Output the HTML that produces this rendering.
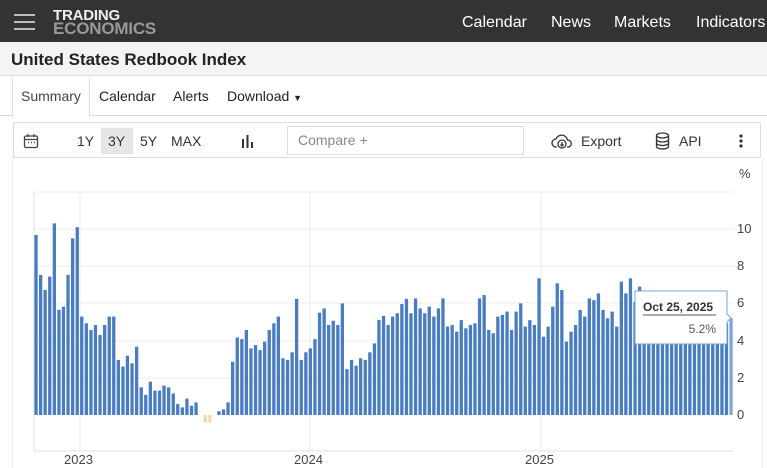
<!DOCTYPE html>
<html><head><meta charset="utf-8"><style>
*{margin:0;padding:0;box-sizing:border-box}
body{width:767px;height:468px;overflow:hidden;background:#fff;font-family:"Liberation Sans",Arial,sans-serif;position:relative;color:#333}
.nav{position:absolute;left:0;top:0;width:767px;height:42px;background:#333}
.ham{position:absolute;left:14px;width:21px;height:2px;background:#bbb}
.logo{position:absolute;left:53px;top:9px;font-weight:bold;font-size:15px;line-height:13px;letter-spacing:-0.2px}
.nav a{position:absolute;top:14px;color:#fff;font-size:16px;text-decoration:none}
.tb{position:absolute;left:0;top:42px;width:767px;height:34px;background:#f4f4f4;border-bottom:1px solid #ddd}
.tb h1{position:absolute;left:11px;top:8px;font-size:17px;font-weight:bold;color:#222}
.tabs{position:absolute;top:77px;left:0;width:767px;height:39px;border-bottom:1px solid #ddd}
.tab{position:absolute;top:11px;font-size:14px;color:#222}
.tool{position:absolute;left:13px;top:122px;width:748px;height:36px;border:1px solid #ddd}
.tool span{position:absolute;font-size:14px;color:#333}
</style></head><body>
<div class="nav">
<div class="ham" style="top:14px"></div><div class="ham" style="top:21px"></div><div class="ham" style="top:28px"></div>
<div class="logo"><span style="color:#eee">TRADING</span><br><span style="color:#999;font-size:17px">ECONOMICS</span></div>
<a style="left:462px">Calendar</a><a style="left:551px">News</a><a style="left:614px">Markets</a><a style="left:696px">Indicators</a>
</div>
<div class="tb"><h1>United States Redbook Index</h1></div>
<div class="tabs">
<div style="position:absolute;left:12px;top:0;width:78px;height:40px;background:#fff;border-left:1px solid #ddd;border-right:1px solid #ddd"></div>
<span class="tab" style="left:21px;color:#444">Summary</span><span class="tab" style="left:99px">Calendar</span><span class="tab" style="left:173px">Alerts</span><span class="tab" style="left:227px">Download <span style="font-size:9px">▼</span></span>
</div>
<div class="tool">
<svg style="position:absolute;left:9px;top:10px" width="16" height="16" viewBox="0 0 16 16" fill="none" stroke="#444" stroke-width="1.3"><rect x="1.5" y="3" width="13" height="11.5" rx="1.5"/><path d="M1.5 6.5h13M5 1v3M11 1v3"/><path d="M5 9.5h1M8 9.5h1M11 9.5h1" stroke-width="1.5"/></svg>
<div style="position:absolute;left:87px;top:5px;width:32px;height:26px;background:#e6e6e6"></div>
<span style="left:63px;top:10px">1Y</span><span style="left:94px;top:10px">3Y</span><span style="left:126px;top:10px">5Y</span><span style="left:157px;top:10px">MAX</span>
<svg style="position:absolute;left:227px;top:11px" width="14" height="14"><path d="M2 5v9M6.5 1v13M11 8v6" stroke="#333" stroke-width="2"/></svg>
<div style="position:absolute;left:273px;top:3px;width:237px;height:29px;border:1px solid #ddd"></div>
<span style="left:284px;top:9px;color:#888">Compare +</span>
<svg style="position:absolute;left:537px;top:9px" width="22" height="18" viewBox="0 0 22 18" fill="none" stroke="#333" stroke-width="1.3"><path d="M6 15H5a4 4 0 0 1 0-8 6 6 0 0 1 11.5 1A3.5 3.5 0 0 1 17 15h-1"/><circle cx="11" cy="12" r="4"/><path d="M11 10v4M9.5 12.5l1.5 1.5 1.5-1.5"/></svg>
<span style="left:567px;top:10px">Export</span>
<svg style="position:absolute;left:641px;top:9px" width="15" height="18" viewBox="0 0 15 18" fill="none" stroke="#333" stroke-width="1.3"><ellipse cx="7.5" cy="3.5" rx="6" ry="2.5"/><path d="M1.5 3.5v11c0 1.4 2.7 2.5 6 2.5s6-1.100 6-2.5v-11M1.5 7.5c0 1.4 2.7 2.5 6 2.5s6-1.1 6-2.5M1.5 11c0 1.4 2.7 2.5 6 2.5s6-1.1 6-2.5"/></svg>
<span style="left:665px;top:10px">API</span>
<svg style="position:absolute;left:725px;top:11px" width="4" height="14"><circle cx="2" cy="2" r="1.6" fill="#333"/><circle cx="2" cy="7" r="1.6" fill="#333"/><circle cx="2" cy="12" r="1.6" fill="#333"/></svg>
</div>
<div style="position:absolute;left:12px;top:158px;width:1px;height:310px;background:#eee"></div>
<div style="position:absolute;left:762px;top:158px;width:1px;height:310px;background:#eee"></div>
<svg id="ch" style="position:absolute;left:0;top:0" width="767" height="468">
<g stroke="#ececec" stroke-width="1">
<path d="M34 192H734M34 229H734M34 266H734M34 303H734M34 341H734M34 378H734M80 192V451M310 192V451M541 192V451"/>
<path d="M34 451H734M34 192V451" stroke="#e0e0e0"/>
</g>
<g font-family="Liberation Sans,Arial,sans-serif" font-size="13" fill="#444">
<text x="739" y="178">%</text>
<text x="737" y="233">10</text><text x="737" y="270">8</text><text x="737" y="307">6</text><text x="737" y="345">4</text><text x="737" y="382">2</text><text x="737" y="419">0</text>
<text x="64" y="464">2023</text><text x="294" y="464">2024</text><text x="525" y="464">2025</text>
</g>
<g id="bars"></g>
<path d="M635 291H727V314L731 318L727 322V344H635Z" fill="#fff" stroke="#7aa6d6" stroke-width="1"/>
<text x="643" y="311" font-family="Liberation Sans,Arial,sans-serif" font-size="12" font-weight="bold" fill="#333">Oct 25, 2025</text>
<path d="M643 315H716" stroke="#555"/>
<text x="716" y="333" text-anchor="end" font-family="Liberation Sans,Arial,sans-serif" font-size="12" fill="#555">5.2%</text>
</svg>
<script>
var v=[9.68,7.53,6.72,7.44,10.3,5.65,5.82,7.53,9.5,10.1,5.29,4.93,4.57,4.84,4.3,4.84,5.29,5.29,2.96,2.6,3.19,2.78,3.67,1.49,1.08,1.79,1.31,1.31,1.58,1.49,1.16,0.59,0.41,0.88,0.5,0.68,0,-0.4,-0.4,0,0.2,0.3,0.68,2.86,4.17,4.08,4.57,3.58,3.76,3.49,3.94,4.57,4.93,5.29,3.05,2.96,3.37,6.24,2.96,3.37,3.58,4.08,5.5,5.73,4.84,5.07,4.84,6.0,2.47,2.96,2.65,3.05,2.96,3.37,3.85,5.11,5.33,4.84,5.29,5.47,5.96,6.24,5.47,
6.27,5.73,5.47,5.82,5.29,5.73,6.27,4.75,4.84,4.48,5.1,4.66,4.84,4.93,6.27,6.45,4.57,4.39,5.29,5.38,5.56,4.57,5.56,6.0,4.75,5.1,4.84,7.35,4.21,4.75,5.82,7.08,6.72,3.94,4.48,4.84,5.65,5.29,6.27,6.18,6.54,5.65,5.2,5.56,4.75,7.17,6.54,7.35,6.09,6.9,5.73,5.38,6.09,5.8,5.5,5.9,5.6,5.4,5.7,5.5,5.3,5.6,5.4,5.6,5.5,5.7,5.4,5.6,4.93,5.2];
var n=v.length,p=(731-36)/(n-1),g=document.getElementById('bars'),s='';
for(var i=0;i<n;i++){var x=36+i*p-1.6,h=Math.abs(v[i])*18.6,y=v[i]>=0?415-h:415;
s+='<rect x="'+x.toFixed(1)+'" y="'+y.toFixed(1)+'" width="3.3" height="'+h.toFixed(1)+'" fill="'+(v[i]<0?'#f5d7a8':(i==n-1?'#7ea6d8':'#4a7cc0'))+'"/>';}
g.innerHTML=s;
</script>
</body></html>
